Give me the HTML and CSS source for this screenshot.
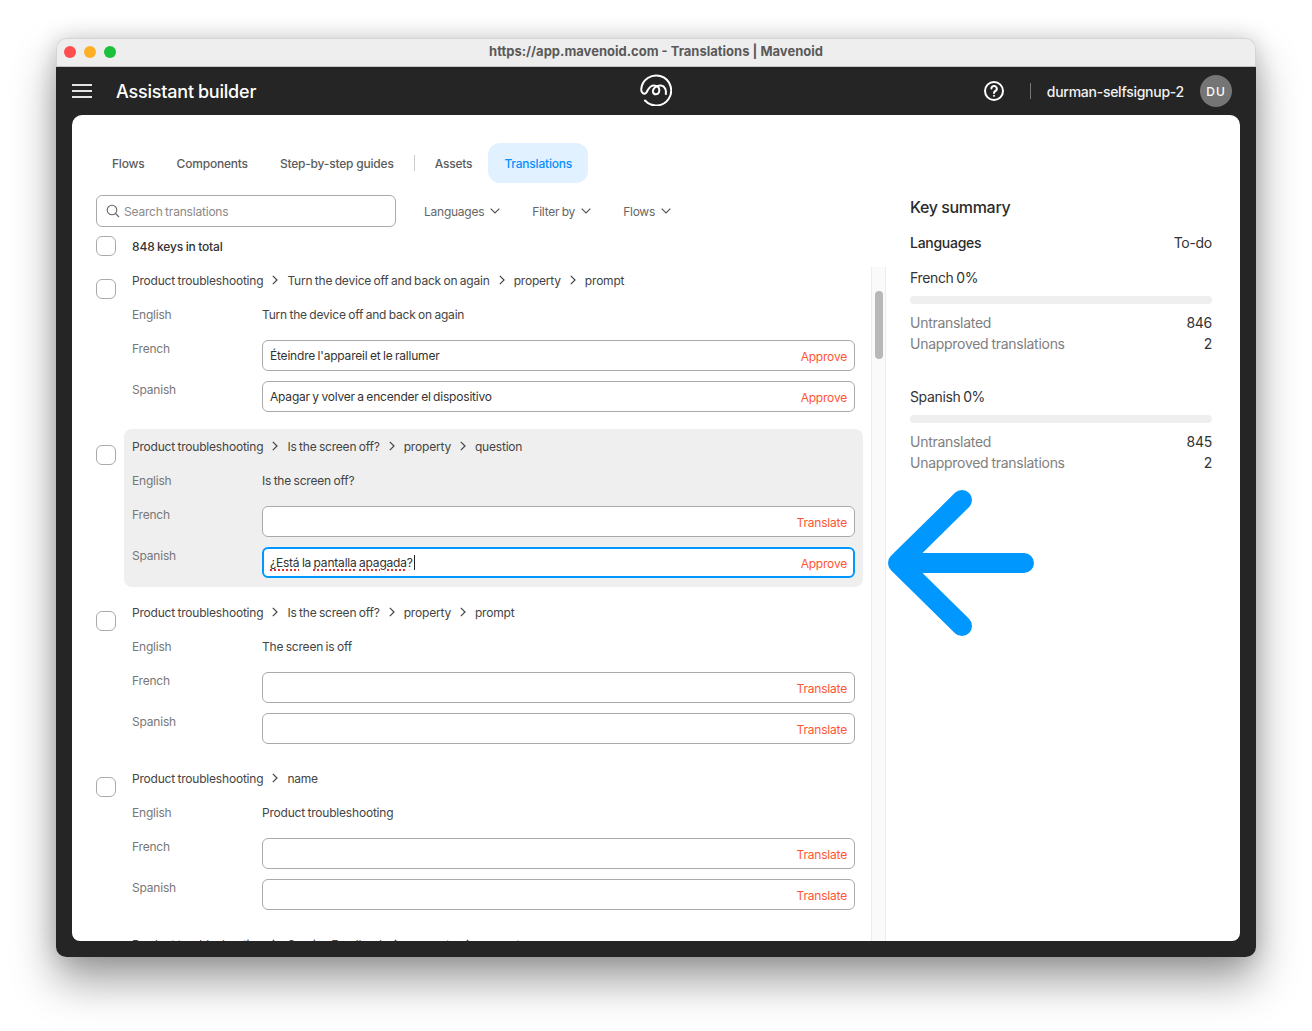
FILE: index.html
```html
<!DOCTYPE html>
<html lang="en">
<head>
<meta charset="utf-8">
<title>Translations | Mavenoid</title>
<link rel="stylesheet" href="styles.css">
</head>
<body>
<div class="window">
  <div class="titlebar">
    <div class="lights"><span class="light red"></span><span class="light yellow"></span><span class="light green"></span></div>
    <div class="url">https://app.mavenoid.com - Translations | Mavenoid</div>
  </div>
  <div class="app">
    <header class="topbar">
      <div class="top-left">
        <svg class="burger" width="20" height="14" viewBox="0 0 20 14"><path d="M0 1h20M0 7h20M0 13h20" stroke="#e4e4e4" stroke-width="2"/></svg>
        <span class="app-title">Assistant builder</span>
      </div>
      <svg class="logo" width="32" height="32" viewBox="0 0 32 32" fill="none" stroke="#fff" stroke-width="2" stroke-linecap="round"><path d="M5 26.5A15 15 0 1 0 1.2 15.5C1.2 19 4 20.6 6 19C8 17 8.5 11.5 14 11.5C18.5 11.5 20 15 19 18C18 21 13.5 21 13 18C12.5 14.5 16.5 11 21 11.5C25 12 26.4 16 25.8 20"/></svg>
      <div class="top-right">
        <svg class="help" width="22" height="22" viewBox="0 0 22 22" fill="none" stroke="#fff" stroke-width="2"><circle cx="11" cy="11" r="9"/><path d="M8.4 8.6a2.7 2.7 0 1 1 4 2.4c-.9.5-1.4 1-1.4 2" stroke-linecap="round"/><circle cx="11" cy="15.8" r=".6" fill="#fff" stroke-width="1"/></svg>
        <span class="top-sep"></span>
        <span class="user">durman-selfsignup-2</span>
        <span class="avatar">DU</span>
      </div>
    </header>
    <main class="card">
      <nav class="tabs">
        <a class="tab">Flows</a>
        <a class="tab">Components</a>
        <a class="tab">Step-by-step guides</a>
        <span class="tab-sep"></span>
        <a class="tab">Assets</a>
        <a class="tab active">Translations</a>
      </nav>
      <div class="body">
        <section class="left">
          <div class="controls">
            <div class="search">
              <svg width="14" height="14" viewBox="0 0 14 14" fill="none" stroke="#666" stroke-width="1.1"><circle cx="6" cy="6" r="4.8"/><path d="M9.5 9.5L13 13"/></svg>
              <span>Search translations</span>
            </div>
            <div class="filters">
              <div class="filter">Languages <svg class="chev" width="10" height="6" viewBox="0 0 10 6"><path d="M.7.7L5 5l4.3-4.3"/></svg></div>
              <div class="filter">Filter by <svg class="chev" width="10" height="6" viewBox="0 0 10 6"><path d="M.7.7L5 5l4.3-4.3"/></svg></div>
              <div class="filter">Flows <svg class="chev" width="10" height="6" viewBox="0 0 10 6"><path d="M.7.7L5 5l4.3-4.3"/></svg></div>
            </div>
          </div>
          <div class="total"><span class="check"></span><span>848 keys in total</span></div>
          <div class="scroller">
            <div class="list">
              <div class="item">
                <span class="check item-check"></span>
                <div class="block">
                  <div class="crumbs"><span>Product troubleshooting</span><svg class="sep" width="6" height="10" viewBox="0 0 6 10"><path d="M.8.8L5 5 .8 9.2"/></svg><span>Turn the device off and back on again</span><svg class="sep" width="6" height="10" viewBox="0 0 6 10"><path d="M.8.8L5 5 .8 9.2"/></svg><span>property</span><svg class="sep" width="6" height="10" viewBox="0 0 6 10"><path d="M.8.8L5 5 .8 9.2"/></svg><span>prompt</span></div>
                  <div class="source"><span class="lang">English</span><span>Turn the device off and back on again</span></div>
                  <div class="tr first"><span class="lang">French</span><div class="field"><span class="val">Éteindre l'appareil et le rallumer</span><span class="act">Approve</span></div></div>
                  <div class="tr"><span class="lang">Spanish</span><div class="field"><span class="val">Apagar y volver a encender el dispositivo</span><span class="act">Approve</span></div></div>
                </div>
              </div>
              <div class="item">
                <span class="check item-check"></span>
                <div class="block hover">
                  <div class="crumbs"><span>Product troubleshooting</span><svg class="sep" width="6" height="10" viewBox="0 0 6 10"><path d="M.8.8L5 5 .8 9.2"/></svg><span>Is the screen off?</span><svg class="sep" width="6" height="10" viewBox="0 0 6 10"><path d="M.8.8L5 5 .8 9.2"/></svg><span>property</span><svg class="sep" width="6" height="10" viewBox="0 0 6 10"><path d="M.8.8L5 5 .8 9.2"/></svg><span>question</span></div>
                  <div class="source"><span class="lang">English</span><span>Is the screen off?</span></div>
                  <div class="tr first"><span class="lang">French</span><div class="field"><span class="val"></span><span class="act">Translate</span></div></div>
                  <div class="tr"><span class="lang">Spanish</span><div class="field focus"><span class="val"><span class="typo">¿Está</span> la <span class="typo">pantalla</span> <span class="typo">apagada</span>?<span class="caret"></span></span><span class="act">Approve</span></div></div>
                </div>
              </div>
              <div class="item">
                <span class="check item-check"></span>
                <div class="block">
                  <div class="crumbs"><span>Product troubleshooting</span><svg class="sep" width="6" height="10" viewBox="0 0 6 10"><path d="M.8.8L5 5 .8 9.2"/></svg><span>Is the screen off?</span><svg class="sep" width="6" height="10" viewBox="0 0 6 10"><path d="M.8.8L5 5 .8 9.2"/></svg><span>property</span><svg class="sep" width="6" height="10" viewBox="0 0 6 10"><path d="M.8.8L5 5 .8 9.2"/></svg><span>prompt</span></div>
                  <div class="source"><span class="lang">English</span><span>The screen is off</span></div>
                  <div class="tr first"><span class="lang">French</span><div class="field"><span class="val"></span><span class="act">Translate</span></div></div>
                  <div class="tr"><span class="lang">Spanish</span><div class="field"><span class="val"></span><span class="act">Translate</span></div></div>
                </div>
              </div>
              <div class="item">
                <span class="check item-check"></span>
                <div class="block">
                  <div class="crumbs"><span>Product troubleshooting</span><svg class="sep" width="6" height="10" viewBox="0 0 6 10"><path d="M.8.8L5 5 .8 9.2"/></svg><span>name</span></div>
                  <div class="source"><span class="lang">English</span><span>Product troubleshooting</span></div>
                  <div class="tr first"><span class="lang">French</span><div class="field"><span class="val"></span><span class="act">Translate</span></div></div>
                  <div class="tr"><span class="lang">Spanish</span><div class="field"><span class="val"></span><span class="act">Translate</span></div></div>
                </div>
              </div>
              <div class="item">
                <span class="check item-check"></span>
                <div class="block">
                  <div class="crumbs"><span>Product troubleshooting</span><svg class="sep" width="6" height="10" viewBox="0 0 6 10"><path d="M.8.8L5 5 .8 9.2"/></svg><span>Service Feedback</span><svg class="sep" width="6" height="10" viewBox="0 0 6 10"><path d="M.8.8L5 5 .8 9.2"/></svg><span>property</span><svg class="sep" width="6" height="10" viewBox="0 0 6 10"><path d="M.8.8L5 5 .8 9.2"/></svg><span>prompt</span></div>
                </div>
              </div>
            </div>
            <div class="track"><div class="thumb"></div></div>
          </div>
        </section>
        <aside class="summary">
          <h2 class="sum-title">Key summary</h2>
          <div class="sum-head"><strong>Languages</strong><span>To-do</span></div>
          <div class="sum-lang">
            <div class="sum-name">French 0%</div>
            <div class="bar"></div>
            <div class="stat"><span class="stat-label">Untranslated</span><span>846</span></div>
            <div class="stat"><span class="stat-label">Unapproved translations</span><span>2</span></div>
          </div>
          <div class="sum-lang">
            <div class="sum-name">Spanish 0%</div>
            <div class="bar"></div>
            <div class="stat"><span class="stat-label">Untranslated</span><span>845</span></div>
            <div class="stat"><span class="stat-label">Unapproved translations</span><span>2</span></div>
          </div>
        </aside>
      </div>
    </main>
  </div>
  <svg class="arrow" width="148" height="148" viewBox="0 0 148 148" fill="none" stroke="#0098ff" stroke-width="20" stroke-linecap="round" stroke-linejoin="round"><path d="M74 10L10 73l64 63M10 73h126"/></svg>
</div>
</body>
</html>
```
FILE: styles.css
```css
* { box-sizing: border-box; }
html, body { margin: 0; height: 100%; }
body {
  background: #fff;
  padding: 38px 56px 74px;
  font-family: Inter, "Liberation Sans", sans-serif;
  font-size: 12px;
  letter-spacing: -.2px;
  word-spacing: -.7px;
  color: #333;
  overflow: hidden;
}
.window {
  position: relative;
  height: 919px;
  border-radius: 10px;
  box-shadow: 0 24px 44px rgba(0,0,0,.38), 0 0 22px rgba(0,0,0,.16);
  display: flex;
  flex-direction: column;
}
.titlebar {
  height: 29px;
  flex: none;
  background: #eeeeee;
  border: 1px solid #d4d4d4;
  border-bottom: 1px solid #c4c4c4;
  border-radius: 10px 10px 0 0;
  display: flex;
  align-items: center;
  position: relative;
}
.lights { position: absolute; left: 7px; top: 7px; display: flex; gap: 8px; }
.light { width: 12px; height: 12px; border-radius: 50%; }
.red { background: #ff4d4d; }
.yellow { background: #fdb025; }
.green { background: #1cc03a; }
.url {
  flex: 1;
  text-align: center;
  font-size: 13px;
  font-weight: 700;
  letter-spacing: 0;
  word-spacing: 0;
  color: #5a5a5a;
  padding: 0 0 3px;
}
.app {
  flex: 1;
  min-height: 0;
  background: #252525;
  border-radius: 0 0 10px 10px;
  padding: 0 16px 16px;
  display: flex;
  flex-direction: column;
}
.topbar {
  height: 48px;
  flex: none;
  display: flex;
  align-items: center;
  position: relative;
  justify-content: space-between;
}
.top-left { display: flex; align-items: center; gap: 24px; }
.burger { display: block; }
.app-title { font-size: 18px; font-weight: 500; color: #fff; letter-spacing: -.2px; word-spacing: -.6px; }
.logo { position: absolute; left: 568px; top: 7px; }
.top-right { display: flex; align-items: center; padding-right: 8px; }
.help { display: block; }
.top-sep { width: 1px; height: 16px; background: #777; margin: 0 16px 0 25px; }
.user { font-size: 14px; font-weight: 500; color: #f2f2f2; margin-right: 16px; letter-spacing: -.26px; }
.avatar {
  width: 32px;
  height: 32px;
  border-radius: 50%;
  background: #757575;
  color: #fff;
  font-size: 12px;
  font-weight: 500;
  letter-spacing: 1px;
  display: flex;
  align-items: center;
  justify-content: center;
}
.card {
  flex: 1;
  min-height: 0;
  background: #fff;
  border-radius: 10px 10px 8px 8px;
  overflow: hidden;
  display: flex;
  flex-direction: column;
  padding-top: 28px;
}
.tabs { display: flex; align-items: center; height: 40px; padding-left: 24px; flex: none; margin-bottom: 12px; letter-spacing: -.2px; word-spacing: 0; }
.tab { padding: 0 16px; height: 40px; line-height: 41px; font-weight: 500; color: #5c5c5c; border-radius: 12px; }
.tab.active { background: #e1f1ff; color: #0a8fff; }
.tab-sep { width: 1px; height: 16px; background: #ccc; margin: 0 4px; }
.body { flex: 1; min-height: 0; display: flex; }
.left { width: 790px; margin-left: 24px; display: flex; flex-direction: column; min-height: 0; }
.controls { display: flex; align-items: center; height: 32px; flex: none; }
.search {
  width: 300px;
  height: 32px;
  border: 1px solid #aaa;
  border-radius: 6px;
  display: flex;
  align-items: center;
  gap: 4px;
  padding-left: 9px;
  color: #8a8a8a;
}
.search svg { display: block; }
.filters { display: flex; gap: 32px; margin-left: 28px; }
.filter { display: flex; align-items: center; gap: 6px; color: #666; letter-spacing: -.24px; }
.chev { fill: none; stroke: #555; stroke-width: 1.2; display: block; }
.total { display: flex; align-items: center; gap: 16px; margin-top: 9px; height: 20px; flex: none; font-weight: 500; margin-bottom: 11px; letter-spacing: -.15px; word-spacing: -.5px; }
.check { width: 20px; height: 20px; flex: none; border: 1px solid #aaa; border-radius: 6px; background: #fff; }
.scroller { flex: 1; min-height: 0; display: flex; overflow: hidden; }
.list { width: 775px; margin-top: -4px; flex: none; }
.item { display: flex; gap: 8px; margin-bottom: 8px; }
.item-check { margin-top: 16px; }
.block { width: 739px; height: 158px; padding: 7px 8px 9px; border-radius: 8px; flex: none; }
.block.hover { background: #efefef; }
.crumbs { display: flex; align-items: center; height: 20px; color: #444; }
.sep { fill: none; stroke: #444; stroke-width: 1.2; margin: 0 9px; flex: none; }
.source { display: grid; grid-template-columns: 130px 1fr; height: 20px; line-height: 20px; margin-top: 15px; color: #444; }
.lang { color: #777; line-height: 18px; font-weight: 400; }
.source .lang { line-height: 20px; }
.tr { display: grid; grid-template-columns: 130px 593px; margin-top: 10px; }
.tr.first { margin-top: 15px; }
.field {
  height: 31px;
  background: #fff;
  border: 1px solid #aaa;
  border-radius: 6px;
  display: flex;
  align-items: center;
  justify-content: space-between;
  padding: 0 7px;
  color: #333;
}
.field.focus { border: 2px solid #0098ff; padding: 0 6px; }
.val { white-space: pre; line-height: 15px; }
.act { color: #ff5533; padding-top: 2px; }
.typo { text-decoration: underline dotted #e0312f 1.5px; text-underline-offset: 2px; }
.caret { display: inline-block; width: 1px; height: 15px; background: #222; margin-left: 1px; vertical-align: -3px; }
.track { width: 15px; flex: none; background: #fafafa; border-left: 1px solid #ececec; border-right: 1px solid #ececec; padding: 24px 3px 0; }
.thumb { width: 8px; height: 68px; background: #b8b8b8; border-radius: 4px; }
.summary { width: 302px; margin-left: 24px; font-size: 14px; letter-spacing: -.28px; word-spacing: -.6px; }
.sum-title { margin: 0; font-size: 16px; font-weight: 500; line-height: 24px; color: #2b2b2b; letter-spacing: -.3px; word-spacing: -.6px; }
.sum-head { display: flex; justify-content: space-between; margin-top: 12px; height: 24px; line-height: 24px; color: #333; }
.sum-head strong { font-weight: 500; color: #2b2b2b; }
.sum-lang { margin-bottom: 31px; }
.sum-name { margin-top: 11px; height: 24px; line-height: 24px; color: #333; letter-spacing: -.36px; word-spacing: -.8px; }
.bar { height: 8px; background: #efefef; border-radius: 4px; margin-top: 6px; margin-bottom: 8px; }
.stat { display: flex; justify-content: space-between; height: 21px; line-height: 21px; color: #333; }
.stat-label { color: #808080; }
.arrow { position: absolute; left: 832px; top: 452px; }
```
